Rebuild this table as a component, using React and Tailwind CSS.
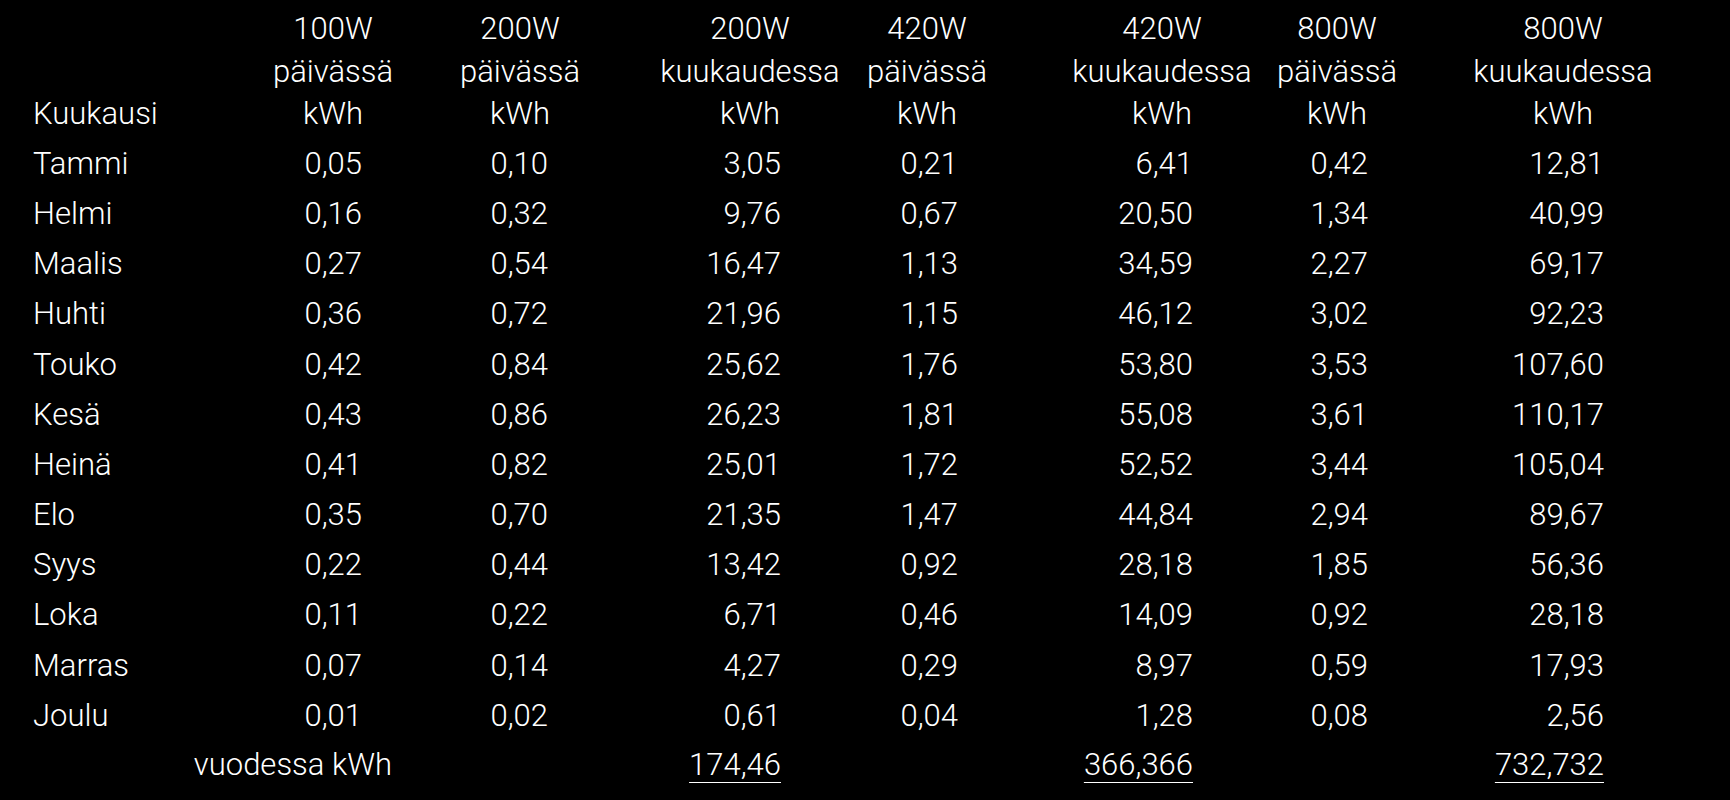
import React from "react";

const cols = [
  { h: ["100W", "päivässä", "kWh"], pr: "pr-[61px]" },
  { h: ["200W", "päivässä", "kWh"], pr: "pr-[62px]" },
  { h: ["200W", "kuukaudessa", "kWh"], pr: "pr-[59px]" },
  { h: ["420W", "päivässä", "kWh"], pr: "pr-[59px]" },
  { h: ["420W", "kuukaudessa", "kWh"], pr: "pr-[59px]" },
  { h: ["800W", "päivässä", "kWh"], pr: "pr-[59px]" },
  { h: ["800W", "kuukaudessa", "kWh"], pr: "pr-[49px]" },
];

const rows = [
  ["Tammi", "0,05", "0,10", "3,05", "0,21", "6,41", "0,42", "12,81"],
  ["Helmi", "0,16", "0,32", "9,76", "0,67", "20,50", "1,34", "40,99"],
  ["Maalis", "0,27", "0,54", "16,47", "1,13", "34,59", "2,27", "69,17"],
  ["Huhti", "0,36", "0,72", "21,96", "1,15", "46,12", "3,02", "92,23"],
  ["Touko", "0,42", "0,84", "25,62", "1,76", "53,80", "3,53", "107,60"],
  ["Kesä", "0,43", "0,86", "26,23", "1,81", "55,08", "3,61", "110,17"],
  ["Heinä", "0,41", "0,82", "25,01", "1,72", "52,52", "3,44", "105,04"],
  ["Elo", "0,35", "0,70", "21,35", "1,47", "44,84", "2,94", "89,67"],
  ["Syys", "0,22", "0,44", "13,42", "0,92", "28,18", "1,85", "56,36"],
  ["Loka", "0,11", "0,22", "6,71", "0,46", "14,09", "0,92", "28,18"],
  ["Marras", "0,07", "0,14", "4,27", "0,29", "8,97", "0,59", "17,93"],
  ["Joulu", "0,01", "0,02", "0,61", "0,04", "1,28", "0,08", "2,56"],
];

const totals = ["", "", "174,46", "", "366,366", "", "732,732"];

export default function App() {
  return (
    <div className="min-h-screen w-full bg-black text-white font-['Roboto',sans-serif] font-light text-[31px] pl-[33px] pt-[8px]">
      <div className="grid grid-cols-[167px_223px_187px_230px_177px_235px_175px_226px]">
        {/* header */}
        <div className="flex flex-col justify-end leading-[42.5px] mb-[3.5px]">
          <div>Kuukausi</div>
        </div>
        {cols.map((c, i) => (
          <div key={i} className="flex flex-col items-end leading-[42.5px] mb-[3.5px]">
            {c.h.map((t, j) => (
              <div key={j} className="w-[180px] text-center whitespace-nowrap">
                {t}
              </div>
            ))}
          </div>
        ))}

        {/* rows */}
        {rows.map((r, ri) => (
          <React.Fragment key={ri}>
            <div className="leading-[50.15px] whitespace-nowrap">{r[0]}</div>
            {r.slice(1).map((v, vi) => (
              <div key={vi} className={`leading-[50.15px] text-right ${cols[vi].pr}`}>
                {v}
              </div>
            ))}
          </React.Fragment>
        ))}

        {/* totals */}
        <div className="col-span-2 leading-[48px] text-right pr-[31px] whitespace-nowrap">
          vuodessa kWh
        </div>
        {totals.slice(1).map((v, vi) => (
          <div key={vi} className={`leading-[48px] text-right ${cols[vi + 1].pr}`}>
            {v && (
              <span className="underline decoration-1 underline-offset-[7px]">{v}</span>
            )}
          </div>
        ))}
      </div>
    </div>
  );
}
